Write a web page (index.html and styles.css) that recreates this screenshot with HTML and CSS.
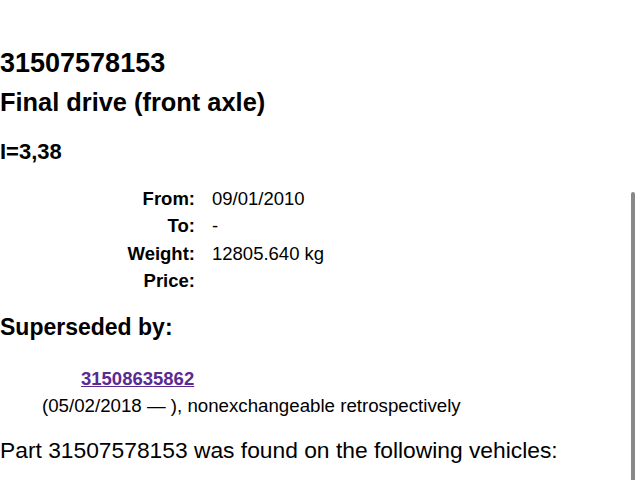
FILE: index.html
```html
<!DOCTYPE html>
<html lang="en">
<head>
<meta charset="utf-8">
<title>31507578153 Final drive (front axle)</title>
<link rel="stylesheet" href="styles.css">
</head>
<body>
<main class="page">
  <h1 class="part-number">31507578153</h1>
  <h2 class="part-name">Final drive (front axle)</h2>
  <h3 class="part-note">I=3,38</h3>
  <dl class="specs">
    <dt>From:</dt><dd>09/01/2010</dd>
    <dt>To:</dt><dd>-</dd>
    <dt>Weight:</dt><dd>12805.640 kg</dd>
    <dt>Price:</dt><dd></dd>
  </dl>
  <h3 class="section-title">Superseded by:</h3>
  <div class="supersede">
    <a class="supersede-link" href="#">31508635862</a>
    <p class="supersede-note">(05/02/2018 — ), nonexchangeable retrospectively</p>
  </div>
  <p class="vehicles">Part 31507578153 was found on the following vehicles:</p>
</main>
<div class="scroll-indicator"></div>
</body>
</html>
```
FILE: styles.css
```css
html, body {
  margin: 0;
  padding: 0;
  background: #ffffff;
}
body {
  font-family: "Liberation Sans", Arial, Helvetica, sans-serif;
  color: #000000;
  overflow: hidden;
}
.page {
  padding-top: 47px;
}
.part-number {
  margin: 0;
  font-size: 27px;
  line-height: 32px;
  font-weight: bold;
}
.part-name {
  margin: 7px 0 0;
  font-size: 25.4px;
  line-height: 32px;
  font-weight: bold;
}
.part-note {
  margin: 20px 0 0;
  font-size: 22px;
  line-height: 28px;
  font-weight: bold;
}
.specs {
  margin: 19px 0 0;
  display: grid;
  grid-template-columns: 195px auto;
  column-gap: 17px;
  font-size: 18.5px;
  line-height: 27.33px;
}
.specs dt {
  font-weight: bold;
  text-align: right;
}
.specs dd {
  margin: 0;
  min-height: 27.33px;
}
.section-title {
  margin: 19px 0 0;
  font-size: 23px;
  line-height: 28px;
  font-weight: bold;
}
.supersede {
  margin-top: 24px;
  font-size: 18.5px;
  line-height: 27px;
}
.supersede-link {
  display: block;
  margin-left: 81px;
  width: max-content;
  font-weight: bold;
  color: #5b2a92;
  text-decoration: underline;
}
.supersede-note {
  margin: 0 0 0 42px;
  font-size: 18.7px;
}
.vehicles {
  margin: 17px 0 0;
  font-size: 22.8px;
  line-height: 28px;
}
.scroll-indicator {
  position: fixed;
  top: 192px;
  right: 5px;
  width: 4px;
  height: 300px;
  border-radius: 2px;
  background: #888888;
}
```
